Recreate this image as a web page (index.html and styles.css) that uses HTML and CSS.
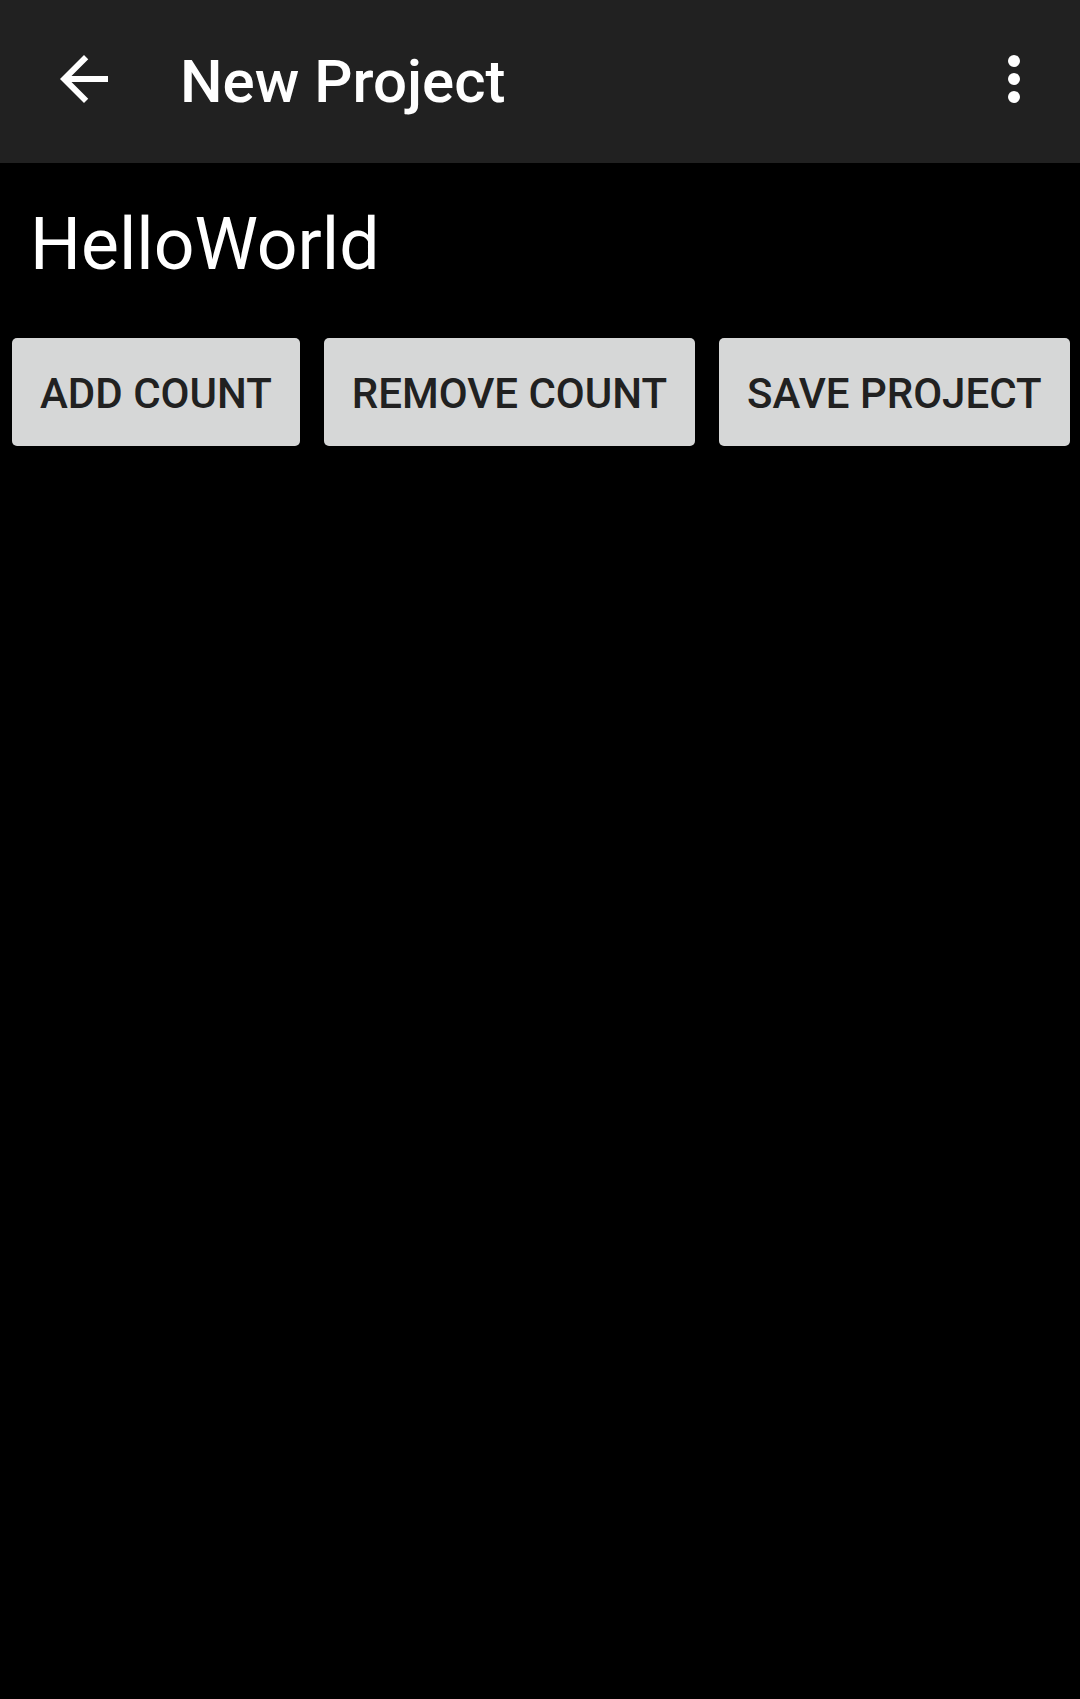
FILE: index.html
```html
<!DOCTYPE html>
<html>
<head>
<meta charset="utf-8">
<link rel="stylesheet" href="styles.css">
</head>
<body>
<div class="app">
  <header class="toolbar">
    <button class="nav" aria-label="Back">
      <svg width="72" height="72" viewBox="0 0 24 24"><path d="M20 11H7.830l5.59-5.59L12 4l-8 8 8 8 1.41-1.41L7.83 13H20v-2z" fill="#fff"/></svg>
    </button>
    <h1 class="title">New Project</h1>
    <button class="more" aria-label="More options">
      <span class="dot"></span><span class="dot"></span><span class="dot"></span>
    </button>
  </header>
  <main class="content">
    <div class="name">HelloWorld</div>
    <div class="actions">
      <button class="btn">ADD COUNT</button>
      <button class="btn">REMOVE COUNT</button>
      <button class="btn">SAVE PROJECT</button>
    </div>
  </main>
</div>
</body>
</html>
```
FILE: styles.css
```css
html, body {
  margin: 0;
  padding: 0;
  background: #000;
}
body {
  font-family: Roboto, "Liberation Sans", sans-serif;
  width: 1080px;
  height: 1699px;
  overflow: hidden;
}
.toolbar {
  height: 163px;
  background: #212121;
  display: flex;
  align-items: center;
}
.nav {
  background: none;
  border: 0;
  padding: 0;
  margin-left: 48px;
  margin-bottom: 5px;
  width: 72px;
  height: 72px;
  display: flex;
  align-items: center;
  justify-content: center;
  flex: none;
}
.nav svg { display: block; }
.title {
  margin: 0 0 0 60px;
  font-size: 60px;
  font-weight: 500;
  color: #fff;
  flex: 1;
  line-height: 1;
}
.more {
  background: none;
  border: 0;
  padding: 0;
  width: 72px;
  height: 72px;
  margin-right: 30px;
  margin-bottom: 5px;
  display: flex;
  flex-direction: column;
  align-items: center;
  justify-content: center;
  gap: 6px;
  flex: none;
}
.dot {
  width: 12px;
  height: 12px;
  border-radius: 50%;
  background: #fff;
  display: block;
}
.content {
  padding: 0 12px;
}
.name {
  color: #fff;
  font-size: 71.5px;
  line-height: 1;
  margin: 46px 0 0 18px;
}
.actions {
  display: flex;
  gap: 24px;
  margin-top: 57px;
}
.btn {
  flex: none;
  white-space: nowrap;
  height: 108px;
  box-sizing: border-box;
  background: #d6d7d7;
  border: 0;
  border-radius: 5px;
  padding: 4px 28px 0;
  font-family: Roboto, "Liberation Sans", sans-serif;
  font-size: 42px;
  font-weight: 500;
  color: #212121;
  line-height: 1;
}
```
